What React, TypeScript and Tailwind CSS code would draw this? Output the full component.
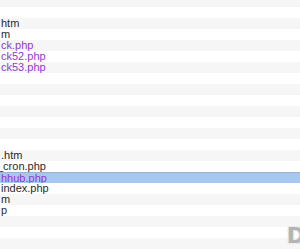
import React from "react";

type Row = { text?: string; kind?: "dark" | "purple" | "sel"; shift?: boolean };

const rows: Row[] = [
  {},
  {},
  { text: "htm", kind: "dark" },
  { text: "m", kind: "dark" },
  { text: "ck.php", kind: "purple" },
  { text: "ck52.php", kind: "purple" },
  { text: "ck53.php", kind: "purple" },
  {},
  {},
  {},
  {},
  {},
  {},
  {},
  { text: ".htm", kind: "dark" },
  { text: "_cron.php", kind: "dark", shift: true },
  { text: "hhub.php", kind: "sel" },
  { text: "index.php", kind: "dark" },
  { text: "m", kind: "dark" },
  { text: "p", kind: "dark" },
  {},
  {},
  {},
];

export default function App() {
  return (
    <div className="relative w-[300px] h-[250px] overflow-hidden bg-white font-['Liberation_Sans',Arial,sans-serif] text-[11px]">
      <div className="-mt-[4px] flex flex-col">
        {rows.map((r, i) => {
          const sel = r.kind === "sel";
          const bg = sel
            ? "bg-[#a6c8f0] border-t border-[#9ab0cc]"
            : i % 2 === 0
            ? "bg-[#f6f6f6]"
            : "bg-white";
          const color =
            r.kind === "purple" || sel ? "text-[#9238d6]" : "text-[#2a2a2a]";
          return (
            <div
              key={i}
              className={`h-[11px] leading-[11px] whitespace-nowrap ${
                r.shift ? "-ml-[3px]" : "pl-[1px]"
              } ${bg} ${color}`}
            >
              {r.text}
            </div>
          );
        })}
      </div>
      <div className="absolute right-[-5px] bottom-[3px] text-[22px] leading-[22px] font-bold text-[#b4b4b4] [text-shadow:-1px_-1px_0_#ececec,1px_-1px_0_#ececec,-1px_1px_0_#ececec,1px_1px_0_#d8d8d8] font-['DejaVu_Sans',sans-serif]">
        D
      </div>
    </div>
  );
}
